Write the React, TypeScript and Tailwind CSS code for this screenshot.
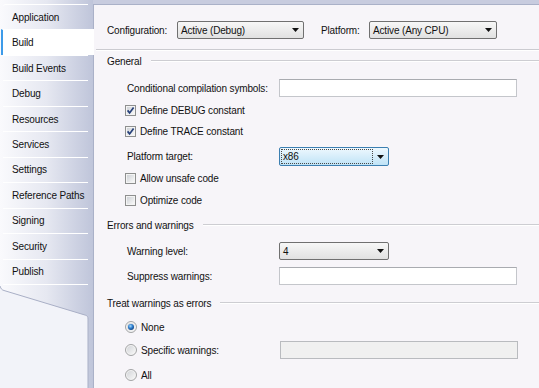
import React from "react";

const tabs = [
  "Application",
  "Build",
  "Build Events",
  "Debug",
  "Resources",
  "Services",
  "Settings",
  "Reference Paths",
  "Signing",
  "Security",
  "Publish",
];

const Arrow = () => (
  <svg width="7" height="4" viewBox="0 0 7 4" className="shrink-0">
    <path d="M0 0 L7 0 L3.5 4 Z" fill="#111" />
  </svg>
);

const Combo = ({ value, className }: { value: string; className: string }) => (
  <div
    className={
      "flex h-[18px] items-center justify-between rounded-[2px] border border-[#707070] bg-linear-to-b from-[#f7f7f7] to-[#e1e1e1] pl-[3px] pr-[4px] " +
      className
    }
  >
    <span>{value}</span>
    <Arrow />
  </div>
);

const Check = ({ on }: { on?: boolean }) => (
  <svg width="11" height="11" viewBox="0 0 11 11" className="shrink-0">
    <defs>
      <linearGradient id="cbg" x1="0" y1="0" x2="1" y2="1">
        <stop offset="0" stopColor="#cfd2d7" />
        <stop offset="1" stopColor="#f8f8f8" />
      </linearGradient>
    </defs>
    <rect x="0.5" y="0.5" width="10" height="10" fill="#f4f4f4" stroke="#8e8f8f" />
    <rect x="2" y="2" width="7" height="7" fill="url(#cbg)" />
    {on && <path d="M2.6 5.4 L4.6 7.9 L8.6 2.4" stroke="#27407a" strokeWidth="1.7" fill="none" />}
  </svg>
);

const Radio = ({ on }: { on?: boolean }) => (
  <svg width="12" height="12" viewBox="0 0 12 12" className="shrink-0">
    <defs>
      <linearGradient id="rbg" x1="0" y1="0" x2="1" y2="1">
        <stop offset="0" stopColor="#d3d5d9" />
        <stop offset="1" stopColor="#f7f7f7" />
      </linearGradient>
      <radialGradient id="rdot" cx="0.4" cy="0.35" r="0.7">
        <stop offset="0" stopColor="#a9dcfb" />
        <stop offset="0.5" stopColor="#2f7fd0" />
        <stop offset="1" stopColor="#123f7c" />
      </radialGradient>
    </defs>
    <circle cx="6" cy="6" r="5.5" fill="#f3f3f3" stroke="#a3a4a5" />
    <circle cx="6" cy="6" r="4" fill="url(#rbg)" />
    {on && <circle cx="6" cy="6" r="3" fill="url(#rdot)" />}
  </svg>
);

const Header = ({ text, className }: { text: string; className: string }) => (
  <div className={"flex h-[18px] items-center " + className}>
    <span>{text}</span>
    <div className="ml-[9px] h-0 flex-1 border-t border-b border-t-[#cdcdd2] border-b-white" />
  </div>
);

export default function App() {
  return (
    <div className="flex h-[388px] w-[539px] overflow-hidden whitespace-nowrap font-['Liberation_Sans',Arial,sans-serif] text-[10px] tracking-[-0.15px] text-[#111]">
      {/* sidebar */}
      <div className="flex w-[93px] shrink-0 flex-col bg-linear-to-r from-[#fafafd] via-[#e6e8f1] to-[#bfc5da] pt-[4px]">
        {tabs.map((t, i) =>
          t === "Build" ? (
            <div
              key={t}
              className="relative z-10 ml-[1px] flex h-[25.6px] w-[93px] items-center border-t border-white border-l-2 border-l-[#3d9be9] bg-white pl-[9px]"
            >
              {t}
            </div>
          ) : (
            <div
              key={t}
              className={
                "ml-[3px] flex h-[25.6px] w-[85px] items-center border-t border-white pl-[9px] " +
                (i === 0 ? "rounded-tl-[3px]" : "")
              }
            >
              {t}
            </div>
          )
        )}
        <svg width="93" height="104" viewBox="0 0 93 104" className="block shrink-0">
          <line x1="3" y1="0.5" x2="88" y2="0.5" stroke="#fff" />
          <path
            d="M0 2 C1 5 2 6 4 6.5 L85.5 31.2 C87.5 31.8 88 33 88 35 L88 104 L0 104 Z"
            fill="#f2f3f9"
          />
          <path
            d="M0 2 C1 5 2 6 4 6.5 L85.5 31.2 C87.5 31.8 88 33 88 35 L88 104"
            fill="none"
            stroke="#a9afc6"
          />
        </svg>
      </div>

      {/* main */}
      <div className="flex min-w-0 flex-1 flex-col">
        <div className="h-[4px] shrink-0 bg-[#c8ccdf]" />
        <div className="flex flex-1 flex-col border-t border-l border-[#aab1c8] bg-[#f7f5f9] pl-[13px]">
          <div className="mt-[16px] flex h-[18px] items-center">
            <span className="w-[70px]">Configuration:</span>
            <Combo value="Active (Debug)" className="w-[127px]" />
            <span className="ml-[17px] w-[48px]">Platform:</span>
            <Combo value="Active (Any CPU)" className="w-[128px]" />
          </div>

          <div className="mt-[10px] ml-[-11px] h-0 border-t border-b border-t-[#cbcbd0] border-b-white" />

          <Header text="General" className="mt-[1px]" />

          <div className="mt-[9px] flex h-[18px] items-center">
            <span className="ml-[20px] w-[152px]">Conditional compilation symbols:</span>
            <div className="h-[18px] w-[238px] border border-[#c4c6cb] border-t-[#a9abb0] bg-white" />
          </div>

          <div className="mt-[4px] flex h-[18px] items-center">
            <span className="ml-[18px]"><Check on /></span>
            <span className="ml-[4px]">Define DEBUG constant</span>
          </div>
          <div className="mt-[3px] flex h-[18px] items-center">
            <span className="ml-[18px]"><Check on /></span>
            <span className="ml-[4px]">Define TRACE constant</span>
          </div>

          <div className="mt-[7px] flex h-[19px] items-center">
            <span className="ml-[20px] w-[152px]">Platform target:</span>
            <div className="flex h-[19px] w-[110px] items-center rounded-[2px] border border-[#3c7fb1] bg-linear-to-b from-[#eef8fe] to-[#bfe3f7] pl-[1px] pr-[4px]">
              <span className="flex h-[15px] w-[92px] items-center border border-dotted border-[#4a4a4a] pl-[1px]">
                x86
              </span>
              <span className="ml-auto"><Arrow /></span>
            </div>
          </div>

          <div className="mt-[3px] flex h-[18px] items-center">
            <span className="ml-[18px]"><Check /></span>
            <span className="ml-[4px]">Allow unsafe code</span>
          </div>
          <div className="mt-[4px] flex h-[18px] items-center">
            <span className="ml-[18px]"><Check /></span>
            <span className="ml-[4px]">Optimize code</span>
          </div>

          <Header text="Errors and warnings" className="mt-[7px]" />

          <div className="mt-[8px] flex h-[18px] items-center">
            <span className="ml-[20px] w-[152px]">Warning level:</span>
            <Combo value="4" className="w-[110px]" />
          </div>

          <div className="mt-[7px] flex h-[18px] items-center">
            <span className="ml-[20px] w-[152px]">Suppress warnings:</span>
            <div className="h-[18px] w-[238px] border border-[#c4c6cb] border-t-[#a9abb0] bg-white" />
          </div>

          <Header text="Treat warnings as errors" className="mt-[9px]" />

          <div className="mt-[6px] flex h-[18px] items-center">
            <span className="ml-[18px]"><Radio on /></span>
            <span className="ml-[4px]">None</span>
          </div>
          <div className="mt-[5px] flex h-[18px] items-center">
            <span className="ml-[18px]"><Radio /></span>
            <span className="ml-[4px] w-[139px]">Specific warnings:</span>
            <div className="h-[18px] w-[238px] border border-[#b9bbbf] bg-[#f0f0f0]" />
          </div>
          <div className="mt-[7px] flex h-[18px] items-center">
            <span className="ml-[18px]"><Radio /></span>
            <span className="ml-[4px]">All</span>
          </div>
        </div>
      </div>
    </div>
  );
}
